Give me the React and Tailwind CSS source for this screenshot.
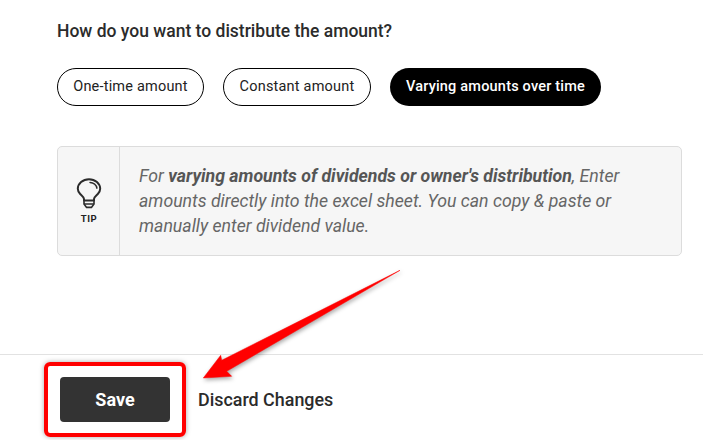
import React from 'react';

function TipIcon() {
  return (
    <svg width="26" height="32" viewBox="0 0 26 32" fill="none" stroke="#2b2b2b" strokeWidth="2" strokeLinecap="round" className="block">
      <path d="M8 22.5 L8 21 C8 19 6 17.8 4.2 16 C2.6 14.4 1.8 12.4 1.8 10.8 C1.8 5.6 6.8 1.2 13 1.2 C19.2 1.2 24.2 5.6 24.2 10.8 C24.2 12.4 23.4 14.4 21.8 16 C20 17.8 18 19 18 21 L18 22.5 Z" strokeLinejoin="round" />
      <path d="M14 4.4 C17.4 4.6 20.4 7 20.9 10.2" strokeWidth="1.5" />
      <path d="M8 23 L8 26 L10.6 29.4 L15.4 29.4 L18 26 L18 23" strokeWidth="1.6" strokeLinejoin="round" />
      <path d="M8.5 26 L17.5 26" strokeWidth="1.4" />
    </svg>
  );
}

export default function App() {
  return (
    <div className="relative w-[703px] h-[440px] overflow-hidden bg-white text-[#212121] font-['Roboto',_'Liberation_Sans',_sans-serif]">
      <div className="pl-[57px] pr-[21px] pt-[21px]">
        <h2 className="text-[17.5px] leading-[20px] font-medium text-[#2b2b2b]">How do you want to distribute the amount?</h2>

        <div className="flex gap-[19px] mt-[27px]">
          <button className="h-[38px] w-[147px] rounded-full border border-black text-[14.5px] tracking-[0.2px] text-[#222]">One-time amount</button>
          <button className="h-[38px] w-[148px] rounded-full border border-black text-[14.5px] tracking-[0.2px] text-[#222]">Constant amount</button>
          <button className="h-[38px] w-[211px] rounded-full bg-black text-[14.5px] tracking-[0.2px] font-medium text-white">Varying amounts over time</button>
        </div>

        <div className="flex h-[110px] mt-[40px] rounded-[5px] border border-[#dcdcdc] bg-[#f6f6f6]">
          <div className="w-[62px] shrink-0 border-r border-[#dcdcdc] flex flex-col items-center pt-[31px]">
            <TipIcon />
            <span className="mt-[4px] pl-[1px] text-[9.5px] leading-[10px] font-bold tracking-[0.6px] text-[#222]">TIP</span>
          </div>
          <p className="pl-[19px] pr-[20px] pt-[17px] text-[17.7px] leading-[25px] italic text-[#666]">
            For <b className="font-bold text-[#555]">varying amounts of dividends or owner's distribution</b>, Enter amounts directly into the excel sheet. You can copy &amp; paste or manually enter dividend value.
          </p>
        </div>
      </div>

      <div className="mt-[98px] border-t border-[#e2e2e2] pl-[60px] pt-[22px] flex items-center gap-[28px]">
        <button className="w-[110px] h-[45px] rounded-[4px] bg-[#333] text-white text-[18px] font-bold">Save</button>
        <span className="pt-[2px] text-[17.9px] font-medium text-[#2b2b2b]">Discard Changes</span>
      </div>

      {/* red annotation box and arrow on top of the page */}
      <div className="absolute left-[44px] top-[362px] w-[142px] h-[75px] rounded-[6px] border-4 border-[#f00] shadow-[0_0_5px_rgba(0,0,0,0.35)]" />
      <svg className="absolute left-0 top-0" width="703" height="440" viewBox="0 0 703 440">
        <path d="M400 270.3 L221.7 360.3 L220.7 355.3 L203.3 378 L231.7 376.3 L226.7 371.3 Z" fill="#f00" stroke="#f00" strokeWidth="0.5" strokeLinejoin="round" style={{ filter: 'drop-shadow(1px 2px 2px rgba(0,0,0,0.35))' }} />
      </svg>
    </div>
  );
}
